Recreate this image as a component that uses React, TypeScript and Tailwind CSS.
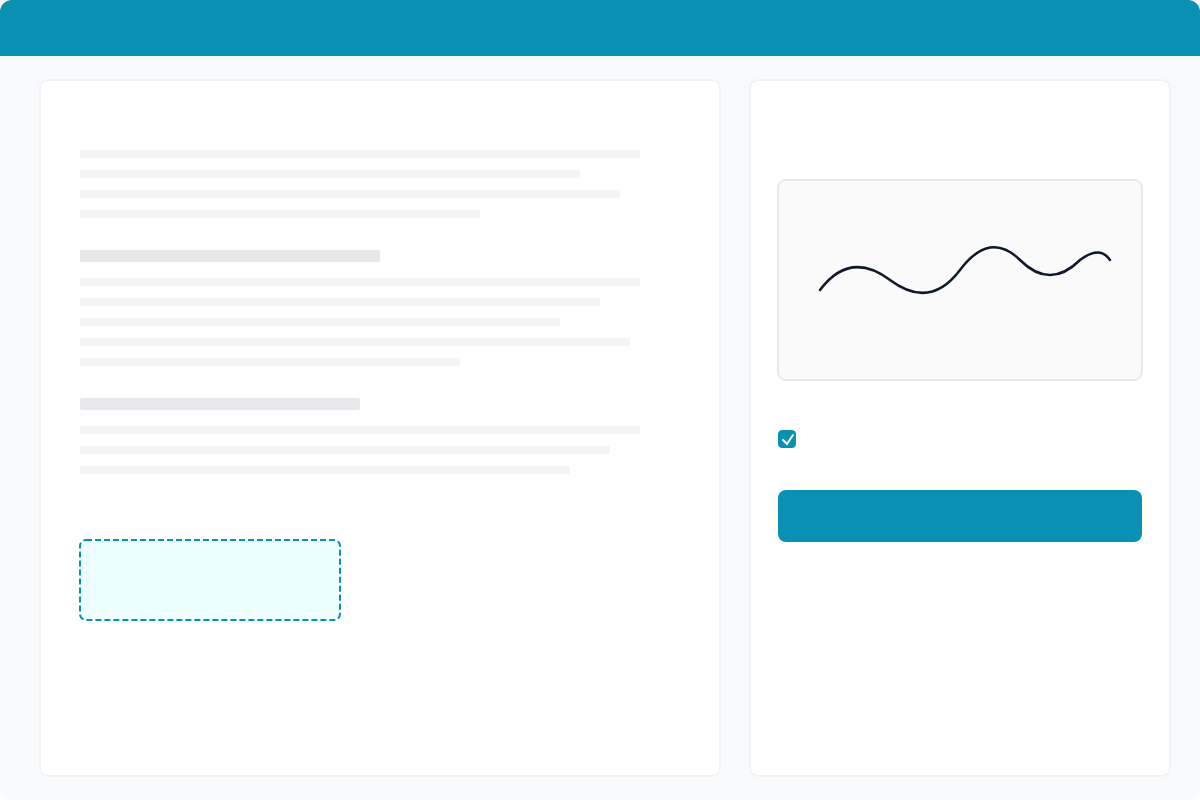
import { useState } from 'react';

interface Section {
  heading?: string;
  lines: string[];
}

const sections: Section[] = [
  { lines: ['w-[560px]', 'w-[500px]', 'w-[540px]', 'w-[400px]'] },
  {
    heading: 'w-[300px]',
    lines: ['w-[560px]', 'w-[520px]', 'w-[480px]', 'w-[550px]', 'w-[380px]'],
  },
  { heading: 'w-[280px]', lines: ['w-[560px]', 'w-[530px]', 'w-[490px]'] },
];

function DocumentSection({ heading, lines }: Section) {
  return (
    <section className="flex flex-col gap-4">
      {heading && <div className={`h-3 max-w-full rounded-[2px] bg-[#e5e7eb] ${heading}`} />}
      <div className="flex flex-col gap-3">
        {lines.map((width, i) => (
          <div key={i} className={`h-2 max-w-full rounded-[2px] bg-[#f3f4f6] ${width}`} />
        ))}
      </div>
    </section>
  );
}

function SignatureField() {
  return (
    <svg width="260" height="80" className="block overflow-visible" aria-hidden="true">
      <rect
        width="260"
        height="80"
        rx="6"
        fill="#ecfeff"
        stroke="#0891b2"
        strokeWidth="2"
        strokeDasharray="6 3"
      />
    </svg>
  );
}

function SignaturePad() {
  return (
    <div className="flex h-[202px] items-center justify-center rounded-[9px] border-2 border-[#e7e9ec] bg-[#fafafa]">
      <svg viewBox="779 181 362 198" className="h-full w-full" fill="none" role="img" aria-label="Signature">
        <path
          d="M820 290 Q850 250 890 280 T960 270 T1020 260 T1080 260 Q1100 245 1110 260"
          stroke="#0f172a"
          strokeWidth="2.5"
          strokeLinecap="round"
        />
      </svg>
    </div>
  );
}

export default function App() {
  const [agreed, setAgreed] = useState(true);

  return (
    <div className="flex min-h-screen flex-col overflow-hidden rounded-xl bg-[#f8fafc]">
      <header className="h-14 bg-[#0891b2]" />

      <main className="flex flex-1 gap-7 py-[23px] pr-[29px] pl-[39px]">
        {/* Document */}
        <article className="min-w-0 flex-1 rounded-[9px] border-2 border-[#f1f2f5] bg-white px-[39px] pt-[69px] pb-10">
          <div className="flex flex-col gap-8">
            {sections.map((section, i) => (
              <DocumentSection key={i} {...section} />
            ))}
          </div>
          <div className="mt-[66px]">
            <SignatureField />
          </div>
        </article>

        {/* Signing panel */}
        <aside className="w-[422px] shrink-0 rounded-[9px] border-2 border-[#f1f2f5] bg-white px-[26px] pt-[98px] pb-10">
          <SignaturePad />
          <form className="px-px pt-[49px]" onSubmit={(e) => e.preventDefault()}>
            <label className="relative block h-[18px] w-[18px] cursor-pointer">
              <input
                type="checkbox"
                aria-label="Agree to sign"
                checked={agreed}
                onChange={(e) => setAgreed(e.target.checked)}
                className="peer block h-[18px] w-[18px] cursor-pointer appearance-none rounded border border-[#0891b2] bg-white checked:bg-[#0891b2]"
              />
              <svg
                viewBox="0 0 18 18"
                className="pointer-events-none absolute inset-0 hidden h-[18px] w-[18px] peer-checked:block"
                fill="none"
                aria-hidden="true"
              >
                <path d="M5 10 L9 14 L15 5" stroke="#ffffff" strokeWidth="2" strokeLinecap="round" />
              </svg>
            </label>
            <button
              type="submit"
              aria-label="Sign document"
              className="mt-[42px] block h-[52px] w-full cursor-pointer rounded-lg bg-[#0891b2] hover:bg-[#0e7490]"
            />
          </form>
        </aside>
      </main>
    </div>
  );
}
